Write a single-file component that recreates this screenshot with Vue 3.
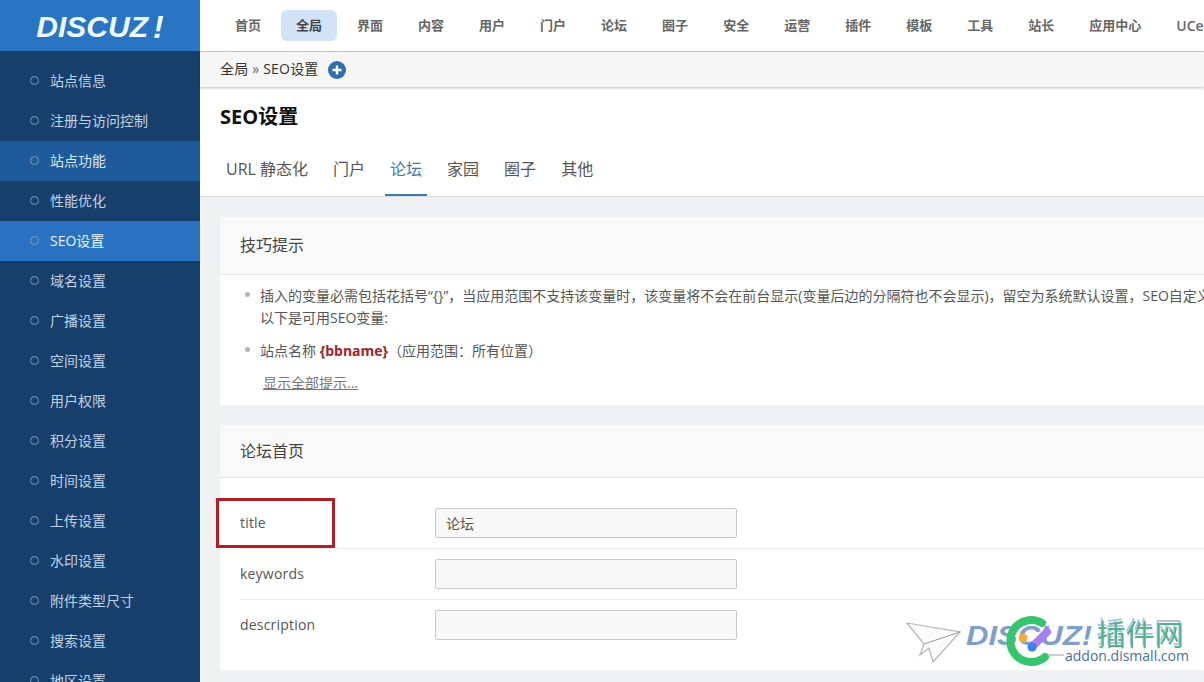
<script setup>
const navItems = ['首页', '全局', '界面', '内容', '用户', '门户', '论坛', '圈子', '安全', '运营', '插件', '模板', '工具', '站长', '应用中心', 'UCenter'];
const menu = ['站点信息', '注册与访问控制', '站点功能', '性能优化', 'SEO设置', '域名设置', '广播设置', '空间设置', '用户权限', '积分设置', '时间设置', '上传设置', '水印设置', '附件类型尺寸', '搜索设置', '地区设置'];
const tabs = ['URL 静态化', '门户', '论坛', '家园', '圈子', '其他'];
const fields = [
  { label: 'title', value: '论坛' },
  { label: 'keywords', value: '' },
  { label: 'description', value: '' }
];
</script>

<template>
  <div class="page">
    <aside class="sidebar">
      <div class="logo"><span>DISCUZ</span><span class="logo-mark">!</span></div>
      <ul class="menu">
        <li v-for="item in menu" :key="item" :class="{ hover: item === '站点功能', current: item === 'SEO设置' }">
          <i class="dot"></i>{{ item }}
        </li>
      </ul>
    </aside>

    <div class="main">
      <nav class="topnav">
        <a v-for="item in navItems" :key="item" :class="{ active: item === '全局' }">{{ item }}</a>
      </nav>

      <div class="crumb">
        <span class="crumb-text">全局 <em>»</em> SEO设置</span>
        <svg class="plus" width="18" height="18" viewBox="0 0 18 18">
          <circle cx="9" cy="9" r="9" fill="#2f6fb0" />
          <path d="M9 4.5v9M4.5 9h9" stroke="#fff" stroke-width="2.4" />
        </svg>
      </div>

      <header class="head">
        <h1>SEO设置</h1>
        <div class="tabs">
          <a v-for="tab in tabs" :key="tab" :class="{ active: tab === '论坛' }">{{ tab }}</a>
        </div>
      </header>

      <div class="content">
        <section class="card tips">
          <h2>技巧提示</h2>
          <ul>
            <li>插入的变量必需包括花括号“{}”，当应用范围不支持该变量时，该变量将不会在前台显示(变量后边的分隔符也不会显示)，留空为系统默认设置，SEO自定义的内容<br />以下是可用SEO变量:</li>
            <li>站点名称 <b>{bbname}</b>（应用范围：所有位置）</li>
          </ul>
          <a class="more">显示全部提示...</a>
        </section>

        <section class="card form">
          <h2>论坛首页</h2>
          <div class="rows">
            <div v-for="field in fields" :key="field.label" class="row">
              <label>{{ field.label }}</label>
              <input type="text" :value="field.value" />
            </div>
          </div>
        </section>
      </div>
    </div>

    <div class="redbox"></div>

    <svg class="watermark" width="300" height="60" viewBox="0 0 300 60">
      <path d="M7 8 L60 17 L33 47 L29 33 L20 40 L24 29 Z" fill="#fbfbfb" stroke="#b5b5b8" stroke-width="1.2" />
      <path d="M60 17 L24 29" stroke="#9a9a9e" stroke-width="1" />
      <text x="66" y="30" class="wm-logo" textLength="126" lengthAdjust="spacingAndGlyphs">DISCUZ!</text>
      <text x="197" y="31" class="wm-cn">插件网</text>
      <path d="M146 40 H164" stroke="#8f9fc0" stroke-width="1" />
      <text x="165" y="46" class="wm-url">addon.dismall.com</text>
      <path d="M142 8 A21 21 0 1 0 145 42" fill="none" stroke="#37c46f" stroke-width="8" stroke-linecap="round" />
      <path d="M132 32 L147 17" stroke="#a87ef5" stroke-width="8" stroke-linecap="round" />
      <circle cx="123" cy="23" r="4.5" fill="#f5ae3c" />
      <circle cx="132" cy="32" r="4.5" fill="#3b82f0" />
    </svg>
  </div>
</template>

<style>
body { margin: 0; }
</style>

<style scoped>
.page {
  position: relative;
  display: flex;
  width: 1204px;
  height: 682px;
  overflow: hidden;
  background: #fff;
  font-family: "Open Sans", "Noto Sans CJK SC", sans-serif;
  font-size: 13px;
  color: #444;
}
.sidebar { width: 200px; flex: none; background: #173f6b; }
.logo {
  height: 51px;
  background: #2a74c4;
  display: flex;
  align-items: center;
  justify-content: center;
  padding-top: 3px;
  box-sizing: border-box;
  color: #eefaff;
  font-family: "Liberation Sans", sans-serif;
  font-style: italic;
  font-weight: bold;
  font-size: 30px;
}
.logo-mark { font-size: 32px; margin-left: 5px; }
.menu { list-style: none; margin: 0; padding: 10px 0 0; }
.menu li {
  display: flex;
  align-items: center;
  height: 40px;
  box-sizing: border-box;
  padding: 0 0 2px 30px;
  color: #c3d3e6;
  font-size: 14px;
}
.menu li.hover { background: #1f5a9a; color: #dbe8f5; }
.menu li.current { background: #2a72c1; color: #eaf3fb; }
.dot {
  width: 7px;
  height: 7px;
  border: 1px solid #7f9dbf;
  border-radius: 50%;
  margin-right: 11px;
}
.main { flex: 1; min-width: 0; display: flex; flex-direction: column; }
.topnav {
  display: flex;
  gap: 5px;
  height: 52px;
  flex: none;
  padding: 10px 0 0 20px;
  box-sizing: border-box;
  border-bottom: 1px solid #c8c8c8;
  white-space: nowrap;
}
.topnav a {
  height: 31px;
  line-height: 31px;
  padding: 0 15px;
  border-radius: 6px;
  font-weight: 600;
  color: #666;
}
.topnav a:last-child { font-size: 14px; }
.topnav a.active { background: #d2e3f7; color: #444; }
.crumb {
  display: flex;
  align-items: center;
  gap: 9px;
  height: 35px;
  flex: none;
  padding-left: 20px;
  background: #f6f6f6;
  box-shadow: 0 1px 3px rgba(0, 0, 0, 0.25);
  position: relative;
  color: #333;
  font-size: 14px;
  letter-spacing: 0.2px;
}
.crumb-text { line-height: 20px; margin-top: -2px; }
.crumb em { font-style: normal; color: #666; }
.plus { flex: none; }
.head { flex: none; height: 110px; box-sizing: border-box; padding-top: 15px; border-bottom: 1px solid #dcdcdc; background: #fff; }
.head h1 { margin: 0 0 0 20px; font-size: 20px; line-height: 30px; font-weight: 700; color: #111; }
.tabs { display: flex; gap: 25px; margin: 25px 0 0 26px; }
.tabs a { position: relative; font-size: 16px; line-height: 24px; color: #555; white-space: nowrap; }
.tabs a.active { color: #3d7ba8; }
.tabs a.active::after {
  content: "";
  position: absolute;
  left: -5px;
  right: -5px;
  bottom: -15px;
  height: 2px;
  background: #3d7ba8;
}
.content {
  flex: 1;
  background: #f0f1f2;
  padding: 20px 0 0 18px;
  border-left: 2px solid #ecf6fd;
}
.card { width: 1100px; background: #fff; margin-bottom: 20px; }
.card h2 {
  margin: 0;
  padding-left: 20px;
  font-size: 16px;
  font-weight: 400;
  color: #444;
  background: #f9f9f9;
  border-bottom: 1px solid #e2e2e2;
}
.tips { height: 188px; }
.tips h2 { height: 57px; line-height: 57px; }
.tips ul { list-style: none; margin: 0; padding: 10px 0 0 40px; white-space: nowrap; color: #555; }
.tips li { position: relative; line-height: 22px; margin-bottom: 11px; font-size: 14px; }
.tips li::before {
  content: "";
  position: absolute;
  left: -15px;
  top: 7px;
  width: 5px;
  height: 5px;
  border-radius: 50%;
  background: #b4b4b4;
}
.tips b { color: #a3222a; font-weight: 700; }
.more { display: block; margin: -1px 0 0 43px; font-size: 14px; color: #777; text-decoration: underline; line-height: 22px; }
.form { height: 245px; }
.form h2 { height: 52px; line-height: 52px; }
.rows { padding: 20px 0 0 20px; }
.row {
  display: flex;
  align-items: center;
  height: 51px;
  box-sizing: border-box;
  border-bottom: 1px solid #eee;
  font-size: 14px;
  letter-spacing: 0.2px;
  color: #555;
}
.row:last-child { border-bottom-color: transparent; }
.row label { width: 195px; flex: none; margin-top: -2px; }
.row input {
  width: 302px;
  height: 30px;
  box-sizing: border-box;
  padding: 0 10px;
  border: 1px solid #c9c9c9;
  border-radius: 2px;
  background: #f8f8f8;
  font: inherit;
  font-size: 14px;
  color: #555;
}
.redbox {
  position: absolute;
  left: 216px;
  top: 498px;
  width: 119px;
  height: 50px;
  box-sizing: border-box;
  border: 3px solid #b01e26;
}
.watermark { position: absolute; left: 900px; top: 615px; }
.wm-logo {
  font-family: "Liberation Sans", sans-serif;
  font-style: italic;
  font-weight: bold;
  font-size: 28px;
  fill: #7f9fca;
}
.wm-cn {
  font-family: "Noto Sans CJK SC", sans-serif;
  font-size: 29px;
  fill: #4fb587;
  filter: drop-shadow(-1px -3px 0 rgba(120, 150, 200, 0.55));
}
.wm-url { font-family: "Open Sans", sans-serif; font-size: 14px; fill: #4c6d9c; }
</style>
